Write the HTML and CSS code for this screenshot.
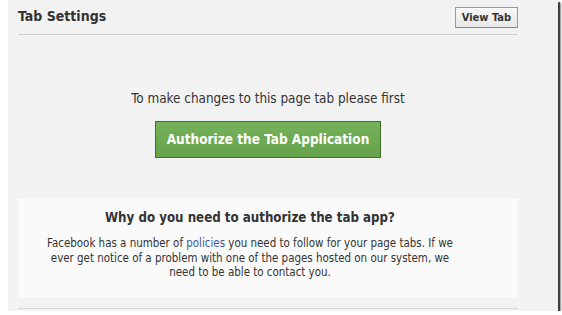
FILE: index.html
```html
<!DOCTYPE html>
<html lang="en">
<head>
    <meta charset="UTF-8">
    <title>Tab Settings</title>
    <link rel="stylesheet" href="styles.css">
</head>
<body>
    <div class="panel">
        <div class="panel-header">
            <h2>Tab Settings</h2>
            <button class="btn-view">View Tab</button>
        </div>

        <div class="panel-body">
            <p class="intro">To make changes to this page tab please first</p>
            <button class="btn-authorize">Authorize the Tab Application</button>

            <div class="info-box">
                <h3>Why do you need to authorize the tab app?</h3>
                <p>Facebook has a number of <a href="#">policies</a> you need to follow for your page tabs. If we<br>
                    ever get notice of a problem with one of the pages hosted on our system, we<br>
                    need to be able to contact you.</p>
            </div>
        </div>

        <div class="panel-footer"></div>
    </div>
</body>
</html>
```

FILE: styles.css
```css
* {
    box-sizing: border-box;
    margin: 0;
    padding: 0;
}

body {
    font-family: 'DejaVu Sans Condensed', 'DejaVu Sans', sans-serif;
    background-color: #fff;
    color: #333;
    overflow: hidden;
}

.panel {
    margin-left: 8px;
    width: 550px;
    height: 311px;
    padding: 0 40px 0 10px;
    background-color: #f2f2f2;
    box-shadow: 2px 2px 1px rgba(0, 0, 0, 0.6), 3px 3px 2px rgba(0, 0, 0, 0.4);
}

.panel-header {
    display: flex;
    justify-content: space-between;
    align-items: flex-start;
    height: 35px;
    border-bottom: 1px solid #cfcfcf;
}

.panel-header h2 {
    font-size: 14px;
    font-weight: bold;
    line-height: 17px;
    margin-top: 8px;
    color: #333;
}

.btn-view {
    margin-top: 7px;
    height: 21px;
    padding: 0 6px;
    font-family: inherit;
    font-size: 11px;
    font-weight: bold;
    color: #333;
    background: linear-gradient(#f5f5f5, #e9e9e9);
    border: 1px solid #999;
    border-bottom-color: #888;
    box-shadow: inset 0 1px 0 #fff;
}

.panel-body {
    display: flex;
    flex-direction: column;
    align-items: center;
}

.intro {
    margin-top: 56px;
    font-size: 13.4px;
    line-height: 16px;
}

.btn-authorize {
    margin-top: 14px;
    padding: 9px 11px;
    font-family: inherit;
    font-size: 13.5px;
    font-weight: bold;
    line-height: 17px;
    color: #fff;
    background: linear-gradient(#76b15b, #66a34b);
    border: 1px solid #3f7128;
}

.info-box {
    align-self: stretch;
    margin-top: 41px;
    height: 99px;
    padding: 10px 46px 0 10px;
    background-color: #fafafa;
    text-align: center;
}

.info-box h3 {
    font-size: 13.2px;
    font-weight: bold;
    line-height: 18px;
}

.info-box p {
    margin-top: 9px;
    font-size: 11.45px;
    line-height: 14.5px;
}

.info-box a {
    color: #3b5998;
    text-decoration: none;
}

.panel-footer {
    margin-top: 10px;
    border-top: 1px solid #d8d8d8;
}
```
